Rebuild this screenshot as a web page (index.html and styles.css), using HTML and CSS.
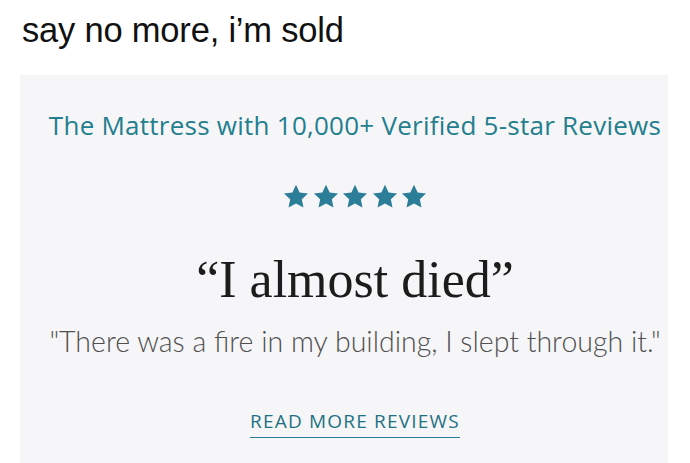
FILE: index.html
```html
<!DOCTYPE html>
<html>
<head>
<meta charset="utf-8">
<link rel="stylesheet" href="styles.css">
</head>
<body>
<div class="page">
  <p class="caption">say no more, i’m sold</p>
  <div class="card">
    <h2 class="headline">The Mattress with 10,000+ Verified 5-star Reviews</h2>
    <div class="stars">
      <svg viewBox="0 0 24 24" class="star"><path d="M12 1.5l3.1 6.6 7.2.9-5.3 5 1.4 7.1L12 17.6l-6.4 3.5 1.4-7.1-5.3-5 7.2-.9z"/></svg>
      <svg viewBox="0 0 24 24" class="star"><path d="M12 1.5l3.1 6.6 7.2.9-5.3 5 1.4 7.1L12 17.6l-6.4 3.5 1.4-7.1-5.3-5 7.2-.9z"/></svg>
      <svg viewBox="0 0 24 24" class="star"><path d="M12 1.5l3.1 6.6 7.2.9-5.3 5 1.4 7.1L12 17.6l-6.4 3.5 1.4-7.1-5.3-5 7.2-.9z"/></svg>
      <svg viewBox="0 0 24 24" class="star"><path d="M12 1.5l3.1 6.6 7.2.9-5.3 5 1.4 7.1L12 17.6l-6.4 3.5 1.4-7.1-5.3-5 7.2-.9z"/></svg>
      <svg viewBox="0 0 24 24" class="star"><path d="M12 1.5l3.1 6.6 7.2.9-5.3 5 1.4 7.1L12 17.6l-6.4 3.5 1.4-7.1-5.3-5 7.2-.9z"/></svg>
    </div>
    <h1 class="quote-title">“I almost died”</h1>
    <p class="quote-body">"There was a fire in my building, I slept through it."</p>
    <a class="more" href="#">READ MORE REVIEWS</a>
  </div>
</div>
</body>
</html>
```
FILE: styles.css
```css
html, body {
  margin: 0;
  padding: 0;
  background: #ffffff;
}
.page {
  width: 690px;
  height: 463px;
  overflow: hidden;
  display: flex;
  flex-direction: column;
}
.caption {
  margin: 0;
  padding: 10px 0 0 22px;
  height: 75px;
  box-sizing: border-box;
  font-family: "Liberation Sans", Arial, sans-serif;
  font-size: 34.5px;
  line-height: 40px;
  color: #111;
  letter-spacing: -0.2px;
}
.card {
  margin-left: 20px;
  width: 648px;
  flex: 1;
  background: #f6f6f8;
  display: flex;
  flex-direction: column;
  align-items: center;
  padding-top: 34px;
  padding-left: 22px;
  box-sizing: border-box;
}
.headline {
  margin: 0;
  font-family: "Open Sans", sans-serif;
  font-weight: 400;
  font-size: 26px;
  line-height: 32px;
  letter-spacing: 0.25px;
  color: #237e8e;
  white-space: nowrap;
}
.stars {
  margin-top: 42px;
  display: flex;
  gap: 1.5px;
}
.star {
  width: 28px;
  height: 28px;
  fill: #2c7d98;
}
.quote-title {
  margin: 40.5px 0 0;
  font-family: "Liberation Serif", "Times New Roman", serif;
  font-weight: 400;
  font-size: 52px;
  line-height: 56px;
  color: #1c1c1c;
  white-space: nowrap;
}
.quote-body {
  margin: 16.5px 0 0;
  font-family: "Lato", sans-serif;
  font-weight: 300;
  font-size: 28.5px;
  line-height: 34px;
  color: #505050;
  white-space: nowrap;
}
.more {
  margin-top: 50.5px;
  font-family: "Open Sans", sans-serif;
  font-size: 19px;
  letter-spacing: 1.2px;
  line-height: 24px;
  color: #1f7283;
  text-decoration: none;
  border-bottom: 1.5px solid #2c7d98;
  padding-bottom: 4.5px;
}
```
